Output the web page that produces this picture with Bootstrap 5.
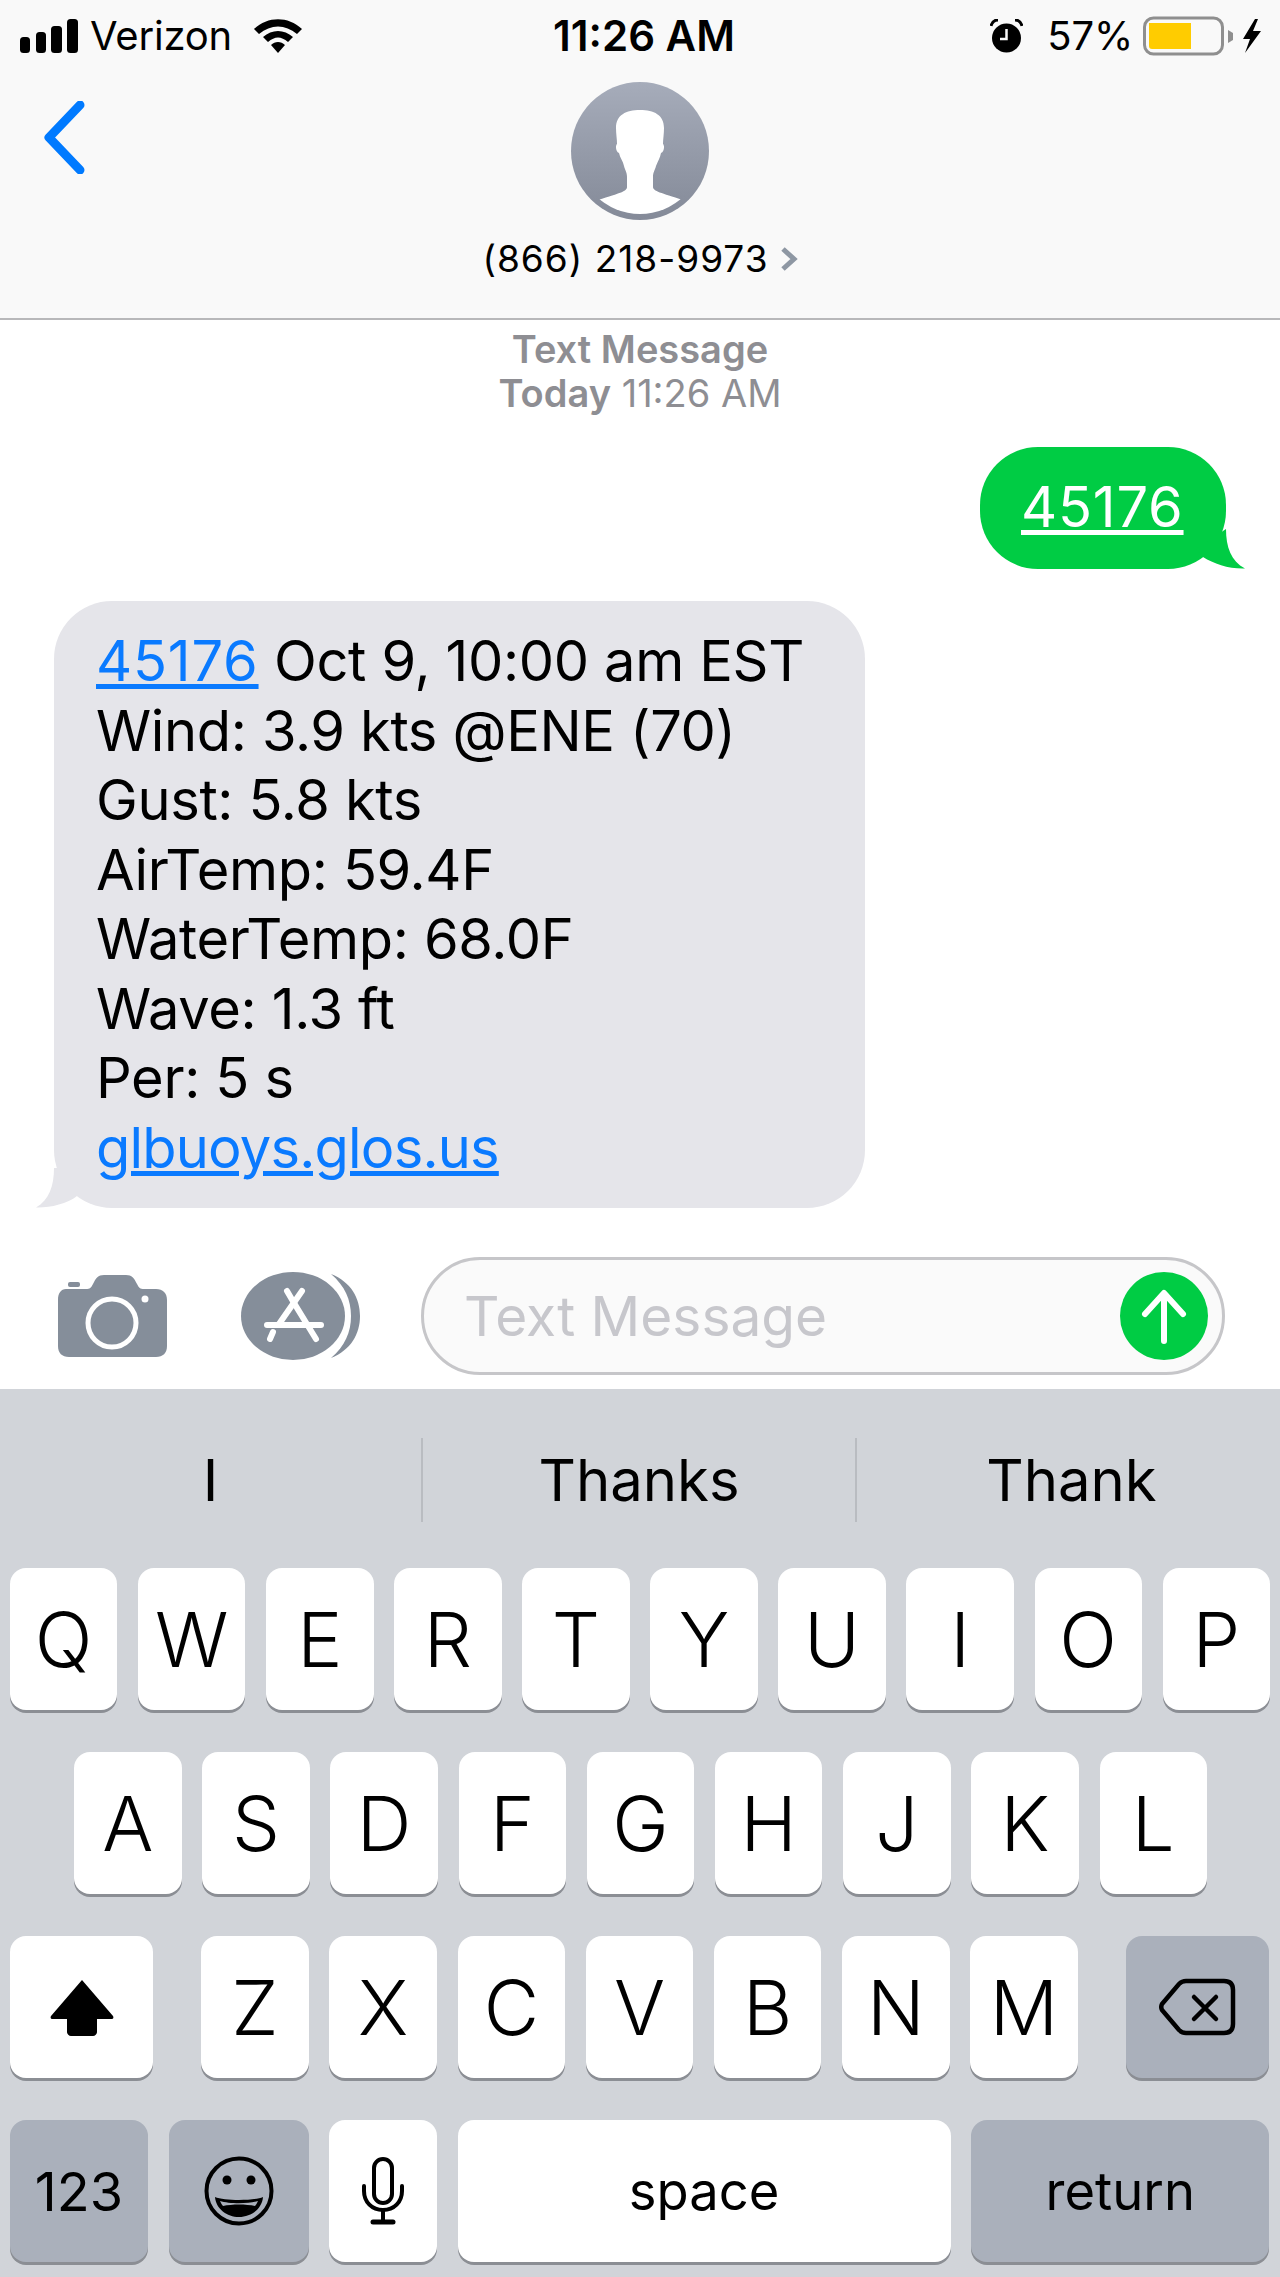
<!DOCTYPE html>
<html lang="en"><head><meta charset="utf-8"><title>Messages</title>
<link rel="stylesheet" href="https://cdn.jsdelivr.net/npm/bootstrap@5.3.0/dist/css/bootstrap.min.css">
<style>
html,body{margin:0;background:#fff}
.phone{width:1280px;height:2277px;font-family:Inter,"Liberation Sans",sans-serif;color:#000;overflow:hidden}
.top-head{height:320px;background:#f9f9f9;border-bottom:2px solid #b8b8ba}
.stat{height:66px;padding:14px 17px 0 20px;font-size:40px;line-height:44px}
.stat-left{width:533px}
.stat-right{flex:1 1 0}
.stat-time{font-weight:600;font-size:42px;width:182px;text-align:center;white-space:nowrap}
.sig{width:58px;height:34px}
.carrier{margin-left:12px;letter-spacing:-.2px}
.wifi{margin-left:22px}
.pct{margin:0 10px 0 24px;letter-spacing:-.2px}
.back-col{width:490px;padding:35px 0 0 43px}
.ctr-col{width:300px}
.avatar{margin-top:16px;display:block}
.phone-no{font-size:37px;line-height:44px;margin-top:17px;letter-spacing:1px;white-space:nowrap}
.chev{margin-left:11px}
.stamp{padding-top:7px;text-align:center;color:#8e8e93;font-size:38px;line-height:44px}
.bub-row{padding:0 54px}
.bub{position:relative;font-size:56px;line-height:69.5px;letter-spacing:-.35px}
.lnk-num{letter-spacing:.8px}
.lnk-url{letter-spacing:-.8px}
.bub-out{margin-top:32px;background:#00cc44;color:#fff;width:246px;height:122px;border-radius:58px;padding:26px 0 0 41px}
.bub-out a{color:#fff}
.bub-in{margin-top:32px;background:#e5e5ea;width:811px;height:607px;border-radius:58px;padding:26px 0 0 42px}
.bub-in a{color:#0a7aff}
.tail{position:absolute;bottom:0}
.tail-r{right:-20px}
.tail-l{left:-25px}
.compose{margin-top:49px;padding-left:58px;height:118px}
.appico{margin-left:74px}
.pill{margin-left:61px;width:804px;height:118px;border:3px solid #c6c6c9;border-radius:59px;background:#fafafa;padding:0 14px 0 40px;font-size:55px;color:#c7c7cc}
.kb{margin-top:14px;height:888px;background:#d1d4d9;padding-top:49px}
.pred{height:84px;margin-bottom:46px;font-size:58px}
.pred-a{width:423px;border-right:2px solid #b9bcc1}
.pred-b{width:434px;border-right:2px solid #b9bcc1}
.pred-c{width:423px;padding-left:6px}
.kb-row{padding:0 10px;height:142px;margin-bottom:42px;gap:20.7px}
.kb-mid{padding-left:74px}
.kc{height:142px;width:107.5px;border-radius:16px;background:#fff;box-shadow:0 3px 0 #8b8e94;font-size:76px;font-weight:350}
.kc-dk{background:#aab0bb}
.kc-sm{font-size:52.5px;font-weight:400}
.k-123{font-size:54px}
.k-shift{width:143px;margin-right:27.5px}
.k-del{width:143px;margin-left:27px}
.k-123{width:138px}
.k-emo{width:140px}
.k-space{width:493px}
.k-ret{width:298px}
</style></head><body>
<div class="phone d-flex flex-column">
<header class="top-head">
 <div class="stat d-flex align-items-start">
  <div class="stat-left d-flex align-items-center">
   <svg class="sig" viewBox="0 0 58 34" fill="#000"><rect x="0" y="18" width="10" height="16" rx="3.5"/><rect x="16" y="13" width="10" height="21" rx="3.5"/><rect x="31" y="7" width="11" height="27" rx="3.5"/><rect x="47" y="0" width="11" height="34" rx="3.5"/></svg>
   <span class="carrier">Verizon</span>
   <svg class="wifi" width="48" height="34" viewBox="0 0 48 34"><path d="M0 10 C14 -3 34 -3 48 10 L43 15 C31 5 17 5 5 15 Z M9 18 C18 10 30 10 39 18 L34 23 C27 17 21 17 14 23 Z M17 26 C21 22 27 22 31 26 L24 34 Z" fill="#000"/></svg>
  </div>
  <div class="stat-time">11:26 AM</div>
  <div class="stat-right d-flex align-items-center justify-content-end">
   <svg width="33" height="34" viewBox="0 0 33 34"><circle cx="16.5" cy="19" r="14.5" fill="#000"/><path d="M16.5 10 V20 H10" fill="none" stroke="#f9f9f9" stroke-width="2.5"/><path d="M1 7 C2 3 5 1 8 1 M32 7 C31 3 28 1 25 1" fill="none" stroke="#000" stroke-width="3"/></svg>
   <span class="pct">57%</span>
   <svg width="120" height="40" viewBox="0 0 120 40"><rect x="1.5" y="2" width="78" height="36" rx="9" fill="none" stroke="#8f8f8f" stroke-width="3"/><path d="M6 7 H48 V33 H9 a3 3 0 0 1 -3 -3 Z" fill="#ffcc00"/><path d="M85 14 L90 17 V24 L85 27 Z" fill="#8f8f8f"/><path d="M112 3 L100 23 H107 L102 37 L118 15 H110 L115 3 Z" fill="#000"/></svg>
  </div>
 </div>
 <div class="d-flex">
  <div class="back-col"><svg width="42" height="73" viewBox="0 0 42 73"><path d="M37 4 L6 36.5 L37 69" fill="none" stroke="#007aff" stroke-width="9" stroke-linecap="round" stroke-linejoin="round"/></svg></div>
  <div class="ctr-col d-flex flex-column align-items-center">
   <svg class="avatar" width="138" height="138" viewBox="0 0 138 138"><defs><linearGradient id="av" x1="0" y1="0" x2="0" y2="1"><stop offset="0" stop-color="#a6acba"/><stop offset="1" stop-color="#848a98"/></linearGradient><clipPath id="avc"><circle cx="69" cy="69" r="63"/></clipPath></defs><circle cx="69" cy="69" r="69" fill="url(#av)"/><path clip-path="url(#avc)" d="M69 28 C55 28 45 33 45 46 C45 52 46 57 46 62 C44 64 45 70 48 71 C49 76 52 79 53 84 C54 88 56 90 56 95 V105 C56 109 50 111 27 118 L20 140 H118 L112 118 C90 111 82 109 82 105 V95 C82 90 84 88 85 84 C87 79 89 76 90 71 C93 70 94 64 92 62 C92 57 93 52 93 46 C93 33 83 28 69 28 Z" fill="#fff"/></svg>
   <div class="phone-no d-flex align-items-center">(866) 218-9973<svg class="chev" width="18" height="26" viewBox="0 0 18 26"><path d="M3 3 L14 13 L3 23" fill="none" stroke="#8e97a3" stroke-width="5"/></svg></div>
  </div>
 </div>
</header>
<main>
 <div class="stamp"><div class="fw-semibold">Text Message</div><div><span class="fw-semibold">Today</span> 11:26 AM</div></div>
 <div class="bub-row d-flex justify-content-end">
  <div class="bub bub-out"><a class="lnk-num" href="#">45176</a>
   <svg class="tail tail-r" width="50" height="40" viewBox="0 0 50 40"><path d="M30 0 C30 18 35 32 49 39.5 C33 40 18 35 7 28 L0 20 Z" fill="#00cc44"/></svg>
  </div>
 </div>
 <div class="bub-row d-flex">
  <div class="bub bub-in"><a class="lnk-num" href="#">45176</a> Oct 9, 10:00 am EST<br>Wind: 3.9 kts @ENE (70)<br>Gust: 5.8 kts<br>AirTemp: 59.4F<br>WaterTemp: 68.0F<br>Wave: 1.3 ft<br>Per: 5 s<br><a class="lnk-url" href="#">glbuoys.glos.us</a>
   <svg class="tail tail-l" width="50" height="40" viewBox="0 0 50 40"><path d="M25 0 C25 18 20 32 7 39.5 C20 40 38 36 48 28 L50 0 Z" fill="#e5e5ea"/></svg>
  </div>
 </div>
 <div class="compose d-flex align-items-center">
  <svg width="109" height="82" viewBox="0 0 109 82" fill="#858e9a"><rect x="10" y="7" width="12" height="5" rx="2"/><path d="M8 14 H28 C32 14 33 13 35 9 C38 3 40 0 46 0 H68 C74 0 76 3 79 9 C81 13 82 14 86 14 H98 C105 14 109 18 109 25 V71 C109 78 105 82 98 82 H11 C4 82 0 78 0 71 V25 C0 18 3 14 8 14 Z"/><circle cx="54" cy="48" r="24" fill="none" stroke="#fff" stroke-width="5"/><circle cx="87" cy="24" r="3.5" fill="#fff"/></svg>
  <svg class="appico" width="119" height="88" viewBox="0 0 119 88"><ellipse cx="52" cy="44" rx="52" ry="44" fill="#858e9a"/><path d="M90 2 C110 10 119 26 119 44 C119 62 110 78 90 86 C104 74 110 60 110 44 C110 28 104 14 90 2 Z" fill="#858e9a"/><g fill="none" stroke="#fff" stroke-width="6" stroke-linecap="round"><path d="M26 53 H80"/><path d="M46 19 L53 31 L75 67"/><path d="M61 19 L38 52 M32 60 L29 67"/></g></svg>
  <div class="pill d-flex align-items-center justify-content-between"><span>Text Message</span>
   <svg width="88" height="88" viewBox="0 0 88 88"><circle cx="44" cy="44" r="44" fill="#00cc44"/><path d="M44 69 V22 M25 42 L44 21 L63 42" fill="none" stroke="#fff" stroke-width="6" stroke-linecap="round" stroke-linejoin="round"/></svg>
  </div>
 </div>
</main>
<section class="kb">
 <div class="pred d-flex">
  <div class="pred-a d-flex align-items-center justify-content-center">I</div>
  <div class="pred-b d-flex align-items-center justify-content-center">Thanks</div>
  <div class="pred-c d-flex align-items-center justify-content-center">Thank</div>
 </div>
 <div class="kb-row d-flex">
  <div class="kc d-flex align-items-center justify-content-center">Q</div><div class="kc d-flex align-items-center justify-content-center">W</div><div class="kc d-flex align-items-center justify-content-center">E</div><div class="kc d-flex align-items-center justify-content-center">R</div><div class="kc d-flex align-items-center justify-content-center">T</div><div class="kc d-flex align-items-center justify-content-center">Y</div><div class="kc d-flex align-items-center justify-content-center">U</div><div class="kc d-flex align-items-center justify-content-center">I</div><div class="kc d-flex align-items-center justify-content-center">O</div><div class="kc d-flex align-items-center justify-content-center">P</div>
 </div>
 <div class="kb-row kb-mid d-flex">
  <div class="kc d-flex align-items-center justify-content-center">A</div><div class="kc d-flex align-items-center justify-content-center">S</div><div class="kc d-flex align-items-center justify-content-center">D</div><div class="kc d-flex align-items-center justify-content-center">F</div><div class="kc d-flex align-items-center justify-content-center">G</div><div class="kc d-flex align-items-center justify-content-center">H</div><div class="kc d-flex align-items-center justify-content-center">J</div><div class="kc d-flex align-items-center justify-content-center">K</div><div class="kc d-flex align-items-center justify-content-center">L</div>
 </div>
 <div class="kb-row d-flex">
  <div class="kc k-shift d-flex align-items-center justify-content-center"><svg width="64" height="57" viewBox="0 0 64 57"><path d="M32 1 L63 37 C64 39 63 40 61 40 H47 V53 C47 55 45 57 43 57 H21 C19 57 17 55 17 53 V40 H3 C1 40 0 39 1 37 Z" fill="#000"/></svg></div>
  <div class="kc d-flex align-items-center justify-content-center">Z</div><div class="kc d-flex align-items-center justify-content-center">X</div><div class="kc d-flex align-items-center justify-content-center">C</div><div class="kc d-flex align-items-center justify-content-center">V</div><div class="kc d-flex align-items-center justify-content-center">B</div><div class="kc d-flex align-items-center justify-content-center">N</div><div class="kc d-flex align-items-center justify-content-center">M</div>
  <div class="kc kc-dk k-del d-flex align-items-center justify-content-center"><svg width="78" height="58" viewBox="0 0 78 58"><path d="M28 3 H66 C72 3 75 6 75 12 V46 C75 52 72 55 66 55 H28 C25 55 23 54 21 52 L4 32 C3 30 3 28 4 26 L21 6 C23 4 25 3 28 3 Z" fill="none" stroke="#000" stroke-width="4.5"/><path d="M36 19 L58 41 M58 19 L36 41" stroke="#000" stroke-width="4.5" stroke-linecap="round"/></svg></div>
 </div>
 <div class="kb-row d-flex">
  <div class="kc kc-dk kc-sm k-123 d-flex align-items-center justify-content-center">123</div>
  <div class="kc kc-dk k-emo d-flex align-items-center justify-content-center"><svg width="70" height="70" viewBox="0 0 70 70"><circle cx="35" cy="35" r="32.5" fill="none" stroke="#000" stroke-width="4"/><circle cx="23" cy="24" r="4.5"/><circle cx="47" cy="24" r="4.5"/><path d="M11 41 C20 45 50 45 59 41 C58 53 47 61 35 61 C23 61 12 53 11 41 Z" fill="#000"/><path d="M16 45 C25 48 45 48 54 45 C53 47 52 49 51 50 C42 48 28 48 19 50 C18 49 17 47 16 45 Z" fill="#aab0bb"/></svg></div>
  <div class="kc d-flex align-items-center justify-content-center"><svg width="42" height="68" viewBox="0 0 42 68"><rect x="12" y="2" width="18" height="44" rx="9" fill="none" stroke="#000" stroke-width="4"/><path d="M2 29 V34 C2 45 10 53 21 53 C32 53 40 45 40 34 V29" fill="none" stroke="#000" stroke-width="4" stroke-linecap="round"/><path d="M21 53 V63" stroke="#000" stroke-width="4"/><path d="M11 65 H31" stroke="#000" stroke-width="5" stroke-linecap="round"/></svg></div>
  <div class="kc kc-sm k-space d-flex align-items-center justify-content-center">space</div>
  <div class="kc kc-dk kc-sm k-ret d-flex align-items-center justify-content-center">return</div>
 </div>
</section>
</div>
<script src="https://cdn.jsdelivr.net/npm/bootstrap@5.3.0/dist/js/bootstrap.bundle.min.js"></script>
</body></html>
